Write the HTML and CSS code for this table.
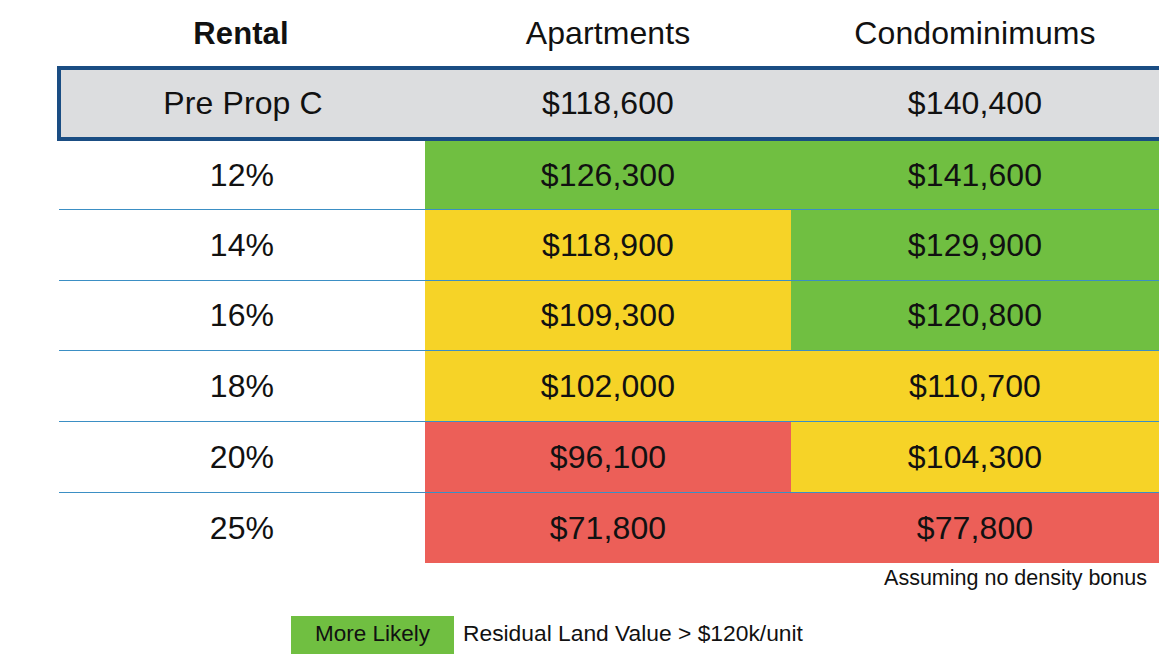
FILE: index.html
```html
<!DOCTYPE html>
<html>
<head>
<meta charset="utf-8">
<link rel="stylesheet" href="styles.css">
</head>
<body>
<div class="sheet">
  <div class="table">
    <div class="row head">
      <div class="cell bold">Rental</div>
      <div class="cell">Apartments</div>
      <div class="cell">Condominimums</div>
    </div>
    <div class="row base">
      <div class="cell">Pre Prop C</div>
      <div class="cell">$118,600</div>
      <div class="cell">$140,400</div>
    </div>
    <div class="row data first">
      <div class="cell">12%</div>
      <div class="cell green">$126,300</div>
      <div class="cell green">$141,600</div>
    </div>
    <div class="row data">
      <div class="cell">14%</div>
      <div class="cell yellow">$118,900</div>
      <div class="cell green">$129,900</div>
    </div>
    <div class="row data short">
      <div class="cell">16%</div>
      <div class="cell yellow">$109,300</div>
      <div class="cell green">$120,800</div>
    </div>
    <div class="row data">
      <div class="cell">18%</div>
      <div class="cell yellow">$102,000</div>
      <div class="cell yellow">$110,700</div>
    </div>
    <div class="row data">
      <div class="cell">20%</div>
      <div class="cell red">$96,100</div>
      <div class="cell yellow">$104,300</div>
    </div>
    <div class="row data last">
      <div class="cell">25%</div>
      <div class="cell red">$71,800</div>
      <div class="cell red">$77,800</div>
    </div>
    <div class="note">Assuming no density bonus</div>
  </div>
  <div class="legend">
    <div class="swatch">More Likely</div>
    <div class="legend-text">Residual Land Value &gt; $120k/unit</div>
  </div>
</div>
</body>
</html>
```
FILE: styles.css
```css
html, body {
  margin: 0;
  padding: 0;
  background: #ffffff;
}
body {
  font-family: "Liberation Sans", Arial, Helvetica, sans-serif;
  color: #111111;
  width: 1168px;
  height: 657px;
  overflow: hidden;
}
.sheet {
  padding-left: 57px;
}
.table {
  width: 1102px;
}
.row {
  display: grid;
  grid-template-columns: 368px 366px 368px;
}
.cell {
  display: flex;
  align-items: center;
  justify-content: center;
  font-size: 32px;
  letter-spacing: 0.1px;
}
.bold {
  font-weight: 700;
  font-size: 31px;
}
.head {
  height: 66px;
}
.head .cell {
  padding-top: 1px;
}
.base {
  background: #dcdddf;
  border-top: 4px solid #1a4d83;
  border-bottom: 4px solid #1a4d83;
  border-left: 4px solid #1a4d83;
  height: 67px;
  grid-template-columns: 364px 366px 368px;
}
.data {
  height: 70px;
  border-bottom: 1px solid #3b8fc4;
  margin-left: 2px;
  grid-template-columns: 366px 366px 368px;
}
.data.first {
  height: 68px;
}
.data.short {
  height: 69px;
}
.data.last {
  border-bottom: none;
}
.green { background: #70bf41; }
.yellow { background: #f6d327; }
.red { background: #ec5f58; }
.note {
  text-align: right;
  font-size: 21.5px;
  padding-right: 12px;
  margin-top: 3px;
  line-height: 24px;
}
.legend {
  display: flex;
  align-items: center;
  gap: 9px;
  margin-left: 234px;
  margin-top: 26px;
}
.swatch {
  background: #70bf41;
  width: 163px;
  height: 38px;
  display: flex;
  align-items: center;
  justify-content: center;
  font-size: 22.5px;
  padding-bottom: 2px;
  box-sizing: border-box;
}
.legend-text {
  font-size: 22.8px;
  padding-bottom: 3px;
}
```
